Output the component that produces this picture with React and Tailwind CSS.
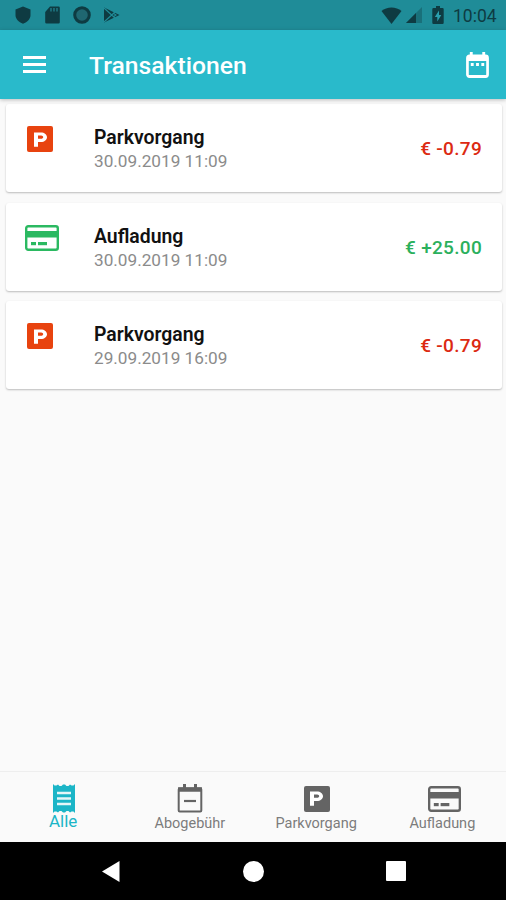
import React, { useState } from 'react';
import { MdLocalParking } from 'react-icons/md';

const transactions = [
  { id: 1, type: 'parking', title: 'Parkvorgang', date: '30.09.2019 11:09', amount: '€ -0.79' },
  { id: 2, type: 'topup', title: 'Aufladung', date: '30.09.2019 11:09', amount: '€ +25.00' },
  { id: 3, type: 'parking', title: 'Parkvorgang', date: '29.09.2019 16:09', amount: '€ -0.79' },
];

function ParkingIcon({ className }) {
  return (
    <span className={`flex h-[26px] w-[26px] items-center justify-center rounded-[2px] pr-px ${className}`}>
      <MdLocalParking className="h-[19px] w-6 shrink-0 text-white" preserveAspectRatio="none" />
    </span>
  );
}

function CardIcon({ className }) {
  return (
    <svg viewBox="0 0 34 26" className={className} fill="currentColor" preserveAspectRatio="none">
      <rect x="1.200" y="1.200" width="31.600" height="23.600" rx="2" fill="none" stroke="currentColor" strokeWidth="2.400" />
      <rect x="1" y="6" width="32" height="6.5" />
      <rect x="6" y="17" width="5" height="3.2" />
      <rect x="13" y="17" width="9" height="3.2" />
    </svg>
  );
}

function ReceiptIcon() {
  return (
    <svg viewBox="0 0 22 29" className="h-[29px] w-[22px]">
      <path
        fill="currentColor"
        d="M0 0l1.500 1.500h2L5 .500l1.500 1.500h2L10 .500h2L13.500 2h2L17 .500l1.500 1h2L22 0v29l-1.500-1.500h-2L17 28.500 15.500 27h-2L12 28.500h-2L8.500 27h-2L5 28.500l-1.500-1h-2L0 29z"
      />
      <path d="M4 9h14M4 14.500h14M4 20h14" stroke="#e4f6f8" strokeWidth="2.400" />
    </svg>
  );
}

function SubscriptionIcon() {
  return (
    <svg viewBox="0 0 26 29" className="h-[29px] w-[26px]" fill="none" stroke="currentColor">
      <rect x="1.700" y="4.500" width="22.600" height="23" rx="1" strokeWidth="2" />
      <path d="M1 5.500h24" strokeWidth="4.500" />
      <path d="M7.500 0v4M18.500 0v4" strokeWidth="3" />
      <path d="M7 17h12" strokeWidth="2.200" />
    </svg>
  );
}

function StatusBar() {
  return (
    <div className="flex h-[30px] shrink-0 items-center bg-[#1f8c98] pl-[15px] pr-[8px] text-[#0e3b42]">
      <svg viewBox="0 0 16 18" className="h-[18px] w-4" fill="currentColor">
        <path d="M8 0.500l7.500 3v5.500c0 4-3 7.200-7.500 8.700C3.500 16.200.5 13 .5 9V3.500z" />
      </svg>
      <svg viewBox="0 0 15 18" className="ml-[14px] h-[18px] w-[15px]">
        <path fill="currentColor" d="M5 .5h8.500a1.300 1.300 0 0 1 1.300 1.300v14.400a1.300 1.300 0 0 1-1.300 1.300h-12A1.300 1.300 0 0 1 .2 16.200V6z" />
        <path stroke="#1f7580" strokeWidth="1.600" d="M6 2v3.500M9 2v3.500M12 2v3.500" />
      </svg>
      <svg viewBox="0 0 18 18" className="ml-[13px] h-[18px] w-[18px]">
        <circle cx="9" cy="9" r="7.300" fill="#1f6771" stroke="currentColor" strokeWidth="3" />
      </svg>
      <svg viewBox="0 0 17 16" className="ml-3 h-4 w-[17px]">
        <path fill="currentColor" d="M1 .5L16.500 8 1 15.500z" />
        <path stroke="#1f8c98" strokeWidth="1.100" fill="none" d="M1 1l11 10M1 15L12 5M10 6l3 2-3 2" />
      </svg>
      <svg viewBox="0 0 22 17" className="ml-auto h-[17px] w-[21px]" fill="currentColor" preserveAspectRatio="none">
        <path d="M11 17L0.500 4C6-.8 16-.8 21.500 4z" />
      </svg>
      <svg viewBox="0 0 16 16" className="ml-[4px] h-4 w-4" fill="currentColor">
        <path d="M16 0v16H0z" opacity="0.35" />
        <path d="M10 6v10H0z" />
      </svg>
      <svg viewBox="0 0 12 18" className="ml-[10px] h-[18px] w-3">
        <path fill="currentColor" d="M4 0h4v2h2.500a1.200 1.200 0 0 1 1.200 1.200v13.600a1.200 1.200 0 0 1-1.200 1.200h-9A1.200 1.200 0 0 1 .3 16.800V3.200A1.200 1.200 0 0 1 1.500 2H4z" />
        <path fill="#2aa0ae" d="M7 4.500L2.800 11h2.500v4.500L9.300 9H7z" />
      </svg>
      <span className="ml-[9px] w-[45px] whitespace-nowrap pt-[3px] text-[17.5px] leading-none">10:04</span>
    </div>
  );
}

function AppBar() {
  return (
    <header className="z-10 flex h-[69px] shrink-0 items-center bg-[#29bacb] pl-[23px] pr-[17px] text-white shadow-[0_1px_4px_rgba(0,0,0,0.25)]">
      <button type="button" aria-label="Menu" className="flex w-[23px] flex-col gap-1">
        <span className="h-[3px] bg-white" />
        <span className="h-[3px] bg-white" />
        <span className="h-[3px] bg-white" />
      </button>
      <h1 className="ml-[43px] pt-[3px] text-[24.7px] font-medium leading-none">Transaktionen</h1>
      <svg viewBox="0 0 24 26" className="ml-auto h-[26px] w-[23px]" preserveAspectRatio="none">
        <rect x="1.500" y="4" width="21" height="20.500" rx="2" fill="none" stroke="currentColor" strokeWidth="2.800" />
        <path fill="currentColor" d="M2 3h20v6H2zM4 0h3v4H4zM17 0h3v4h-3z" />
        <path stroke="currentColor" strokeWidth="3" d="M5 12.500h3M10.500 12.500h3M16 12.500h3" />
      </svg>
    </header>
  );
}

function TransactionCard({ item }) {
  const isTopup = item.type === 'topup';
  return (
    <li className="flex h-[88px] rounded-[3px] bg-white pl-[19px] pr-[20px] shadow-[0_1px_2px_rgba(0,0,0,0.25)]">
      <div className="w-[34px] pt-[22px]">
        {isTopup ? (
          <CardIcon className="h-[26px] w-[34px] text-[#2bb961]" />
        ) : (
          <ParkingIcon className="ml-[2px] bg-[#e8430f]" />
        )}
      </div>
      <div className="ml-[35px] pt-[22px]">
        <p className="text-[19.4px] font-semibold leading-[23px] text-[#111]">{item.title}</p>
        <p className="mt-[2px] text-[17.2px] leading-5 text-[#8b8b8b]">{item.date}</p>
      </div>
      <p className={`ml-auto pt-[33px] text-[19px] font-medium leading-[23px] tracking-[0.3px] ${isTopup ? 'text-[#2bb05c]' : 'text-[#dc2a12]'}`}>
        {item.amount}
      </p>
    </li>
  );
}

const tabs = [
  { id: 'all', label: 'Alle', icon: <ReceiptIcon /> },
  { id: 'subscription', label: 'Abogebühr', icon: <SubscriptionIcon /> },
  { id: 'parking', label: 'Parkvorgang', icon: <ParkingIcon className="bg-[#646464]" /> },
  { id: 'topup', label: 'Aufladung', icon: <CardIcon className="ml-[3px] h-[26px] w-[33px] text-[#646464]" /> },
];

function App() {
  const [activeTab, setActiveTab] = useState('all');

  const visible = transactions.filter(
    (item) => activeTab === 'all' || item.type === activeTab
  );

  return (
    <div className="flex h-[900px] w-[506px] flex-col overflow-hidden bg-[#fafafa] font-['Roboto',sans-serif]">
      <StatusBar />
      <AppBar />

      <ul className="flex flex-1 flex-col gap-[10.5px] pl-[6px] pr-1 pt-[5px]">
        {visible.map((item) => (
          <TransactionCard key={item.id} item={item} />
        ))}
      </ul>

      {/* Filter tabs */}
      <nav className="grid h-[71px] shrink-0 grid-cols-4 border-t border-[#eeeeee] pl-px">
        {tabs.map((tab) => {
          const active = tab.id === activeTab;
          return (
            <button
              key={tab.id}
              type="button"
              onClick={() => setActiveTab(tab.id)}
              className={`flex flex-col items-center pt-3 ${active ? 'text-[#1bb5c7]' : 'text-[#646464]'}`}
            >
              <span className="flex h-[29px] items-center">{tab.icon}</span>
              <span className={active ? '-mt-[2px] pr-[2px] text-[17px] leading-5' : 'pr-px pt-px text-[14.5px] leading-5 text-[#7c7c7c]'}>
                {tab.label}
              </span>
            </button>
          );
        })}
      </nav>

      {/* System navigation */}
      <div className="flex h-[58px] shrink-0 items-center justify-between bg-black pl-[102px] pr-[100px]">
        <svg viewBox="0 0 18 21" className="h-[21px] w-[18px]" fill="white">
          <path d="M17.500 0v21L0 10.500z" />
        </svg>
        <span className="h-[21px] w-[21px] rounded-full bg-white" />
        <span className="h-5 w-5 rounded-[1px] bg-white" />
      </div>
    </div>
  );
}

export default App;
